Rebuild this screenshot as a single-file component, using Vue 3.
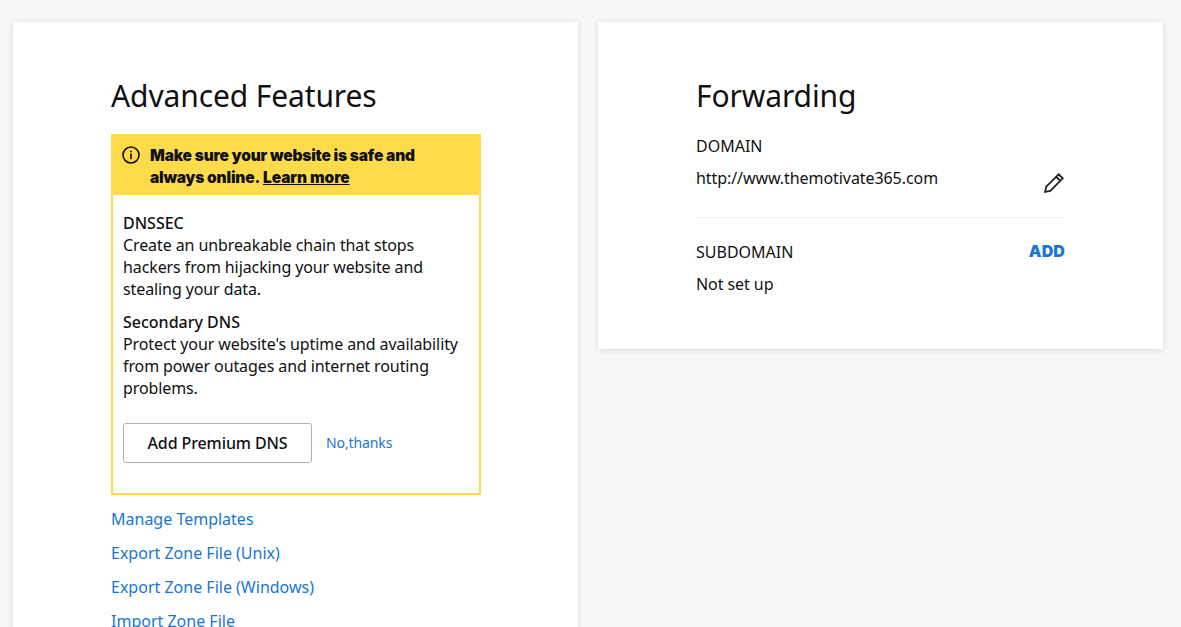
<template>
  <div class="page">
    <section class="card">
      <h2 class="title">Advanced Features</h2>
      <div class="promo">
        <div class="banner">
          <svg class="info" viewBox="0 0 18 18" width="18" height="18" aria-hidden="true">
            <circle cx="9" cy="9" r="8" fill="none" stroke="#111" stroke-width="1.6" />
            <rect x="8.2" y="7.6" width="1.6" height="5.6" fill="#111" />
            <rect x="8.2" y="4.6" width="1.6" height="1.7" fill="#111" />
          </svg>
          <p class="banner-text">Make sure your website is safe and always online. <a class="learn">Learn more</a></p>
        </div>
        <div class="promo-body">
          <div class="feature">
            <strong>DNSSEC</strong>
            <p>Create an unbreakable chain that stops hackers from hijacking your website and stealing your data.</p>
          </div>
          <div class="feature">
            <strong>Secondary DNS</strong>
            <p>Protect your website's uptime and availability from power outages and internet routing problems.</p>
          </div>
          <div class="actions">
            <button class="btn">Add Premium DNS</button>
            <a class="no">No,thanks</a>
          </div>
        </div>
      </div>
      <ul class="links">
        <li v-for="l in links" :key="l">{{ l }}</li>
      </ul>
    </section>
    <section class="card right">
      <h2 class="title">Forwarding</h2>
      <div class="row first">
        <div class="label">DOMAIN</div>
        <div class="value-line">
          <span class="value-text">http://www.themotivate365.com</span>
          <svg class="pencil" viewBox="0 0 20 20" width="24" height="24" aria-hidden="true">
            <path d="M2.6 17.4l.9-4.3L13.9 2.7l3.4 3.4L6.9 16.5z M11.8 4.8l3.4 3.4" fill="none" stroke="#222" stroke-width="1.5" stroke-linejoin="miter" />
          </svg>
        </div>
      </div>
      <div class="row">
        <div class="label-line">
          <span class="label">SUBDOMAIN</span>
          <a class="add">ADD</a>
        </div>
        <div class="value-text value">Not set up</div>
      </div>
    </section>
  </div>
</template>

<script setup>
const links = ['Manage Templates', 'Export Zone File (Unix)', 'Export Zone File (Windows)', 'Import Zone File']
</script>

<style>
html, body { margin: 0; background: #f5f7f8; overflow: hidden; }
</style>

<style scoped>
.page {
  display: flex; gap: 20px; align-items: flex-start;
  padding: 22px 18px 0 13px; height: 605px; overflow: hidden;
  font-family: "Noto Sans", sans-serif; font-size: 16px; line-height: 22px; color: #111;
  background: #f5f7f8;
}
.card { width: 565px; box-sizing: border-box; background: #fff; padding: 53px 97px 30px 98px; box-shadow: 0 1px 6px rgba(0,0,0,.14); }
.right { height: 327px; }
.title { margin: 0 0 19px; font-size: 30px; line-height: 40px; font-weight: 400; color: #111; letter-spacing: -.12px; position: relative; top: 1px; }
.promo { border: 2px solid #fedb4a; }
.banner { background: #fedb4a; margin: -1px -1px 0; display: flex; gap: 10px; padding: 10px 10px 7px 10px; height: 43px; }
.info { margin-top: 1px; flex: none; }
.banner-text { margin: 0; width: 290px; font-family: Inter, sans-serif; font-weight: 900; font-size: 15.5px; letter-spacing: -.18px; line-height: 22px; color: #111; }
.learn { text-decoration: underline; margin-left: 1px; letter-spacing: -.08px; }
.promo-body { padding: 17px 10px 30px; }
.feature { margin-bottom: 11px; }
.feature strong { display: block; font-weight: 500; }
.feature p { margin: 0; letter-spacing: -.1px; }
.actions { display: flex; align-items: center; gap: 14px; margin-top: 24px; }
.btn { width: 189px; height: 40px; font: 500 16px "Noto Sans", sans-serif; letter-spacing: -.1px; color: #111; background: #fff; border: 1px solid #a9b4bf; border-radius: 3px; padding: 0; }
.no { font-size: 14px; color: #1976d2; letter-spacing: -.1px; }
.links { list-style: none; margin: 13px 0 0; padding: 0; color: #1976d2; }
.links li { height: 34px; line-height: 22px; }
.label { letter-spacing: 0; }
.row.first { padding-bottom: 28px; border-bottom: 1px solid #f0f1f2; margin-top: 20px; }
.value-text { letter-spacing: -.07px; }
.value-line { display: flex; justify-content: space-between; align-items: flex-start; margin-top: 10px; }
.pencil { margin-top: 4px; margin-bottom: -6px; }
.label-line { display: flex; justify-content: space-between; align-items: center; margin-top: 23px; }
.add { font-family: Inter, sans-serif; font-weight: 900; color: #1976d2; font-size: 16px; letter-spacing: .1px; margin-right: 1px; position: relative; top: -1px; }
.value { margin-top: 10px; }
</style>
